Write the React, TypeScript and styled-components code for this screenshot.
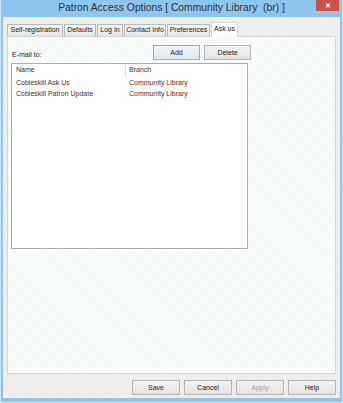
import React from 'react';
import styled, { createGlobalStyle } from 'styled-components';

const GlobalStyle = createGlobalStyle`
    html, body {
        margin: 0;
        padding: 0;
        background: #ffffff;
    }
    * {
        box-sizing: border-box;
    }
`

const WindowS = styled.div`
    width: 343px;
    height: 403px;
    display: flex;
    flex-direction: column;
    background: #8ec5ef;
    border: 1px solid #cfe5f6;
    border-top: none;
    padding: 0 2px 4px 2px;
    font-family: "Liberation Sans", Arial, sans-serif;
`

const TitleBar = styled.div`
    height: 17px;
    display: grid;
    grid-template-columns: 1fr auto 1fr;
    align-items: start;
`

const TitleText = styled.div`
    grid-column: 2;
    font-size: 10.3px;
    line-height: 16px;
    color: #333333;
    white-space: pre;
`

const CloseBtn = styled.div`
    grid-column: 3;
    justify-self: end;
    width: 23px;
    height: 11px;
    background: #c8514c;
    color: #ffffff;
    font-size: 6.5px;
    font-weight: bold;
    line-height: 11px;
    text-align: center;
    margin-right: 1px;
`

const Client = styled.div`
    flex: 1;
    display: flex;
    flex-direction: column;
    background: repeating-linear-gradient(45deg, #f1f1ef 0 1px, #ebebe8 1px 2px);
    padding: 5px 4px 3px 4px;
`

const TabStrip = styled.div`
    display: flex;
    align-items: flex-end;
    height: 14px;
    position: relative;
    z-index: 1;
`

const Tab = styled.div<{ $active?: boolean; $w: number }>`
    width: ${p => p.$w}px;
    height: ${p => p.$active ? 15 : 12}px;
    margin-bottom: ${p => p.$active ? -1 : 0}px;
    margin-right: 1px;
    border: 1px solid ${p => p.$active ? '#d6d6d6' : '#b8b8b8'};
    border-bottom: none;
    background: ${p => p.$active ? '#fcfdfd' : 'linear-gradient(#f4f4f4, #e6e6e6)'};
    font-size: 7px;
    line-height: ${p => p.$active ? 12 : 10}px;
    color: #222222;
    text-align: center;
    white-space: nowrap;
    overflow: hidden;
`

const Panel = styled.div`
    flex: 1;
    display: flex;
    flex-direction: column;
    border: 1px solid #d6d6d6;
    background: repeating-linear-gradient(45deg, #fcfdfd 0 1px, #f4f7f7 1px 2px);
    padding: 8px 3px 0 3px;
`

const TopRow = styled.div`
    display: flex;
    align-items: flex-end;
`

const Label = styled.div`
    width: 142px;
    padding-left: 1px;
    font-size: 7px;
    line-height: 10px;
    color: #222222;
`

const Btn = styled.div<{ $focus?: boolean; $disabled?: boolean; $w: number }>`
    width: ${p => p.$w}px;
    height: 15px;
    border: 1px solid ${p => p.$focus ? '#7db4e6' : '#b4b4b4'};
    background: ${p => p.$focus ? 'linear-gradient(#eef4f8, #dfe9f0)' : 'linear-gradient(#f3f3f3, #e4e4e2)'};
    font-size: 7px;
    line-height: 13px;
    text-align: center;
    color: ${p => p.$disabled ? '#a4a4a4' : '#222222'};
`

const BtnGroup = styled.div`
    display: flex;
    gap: 4px;
`

const ListBox = styled.div`
    margin-top: 3px;
    width: 237px;
    height: 186px;
    background: #ffffff;
    border: 1px solid #adadad;
`

const ListHeader = styled.div`
    display: grid;
    grid-template-columns: 113px 1fr;
    height: 13px;
    font-size: 7px;
    line-height: 12px;
    color: #333333;
`

const HeadCell = styled.div<{ $sep?: boolean }>`
    padding-left: ${p => p.$sep ? 3 : 4}px;
    border-left: ${p => p.$sep ? '1px solid #e2e2e2' : 'none'};
`

const ListRow = styled.div`
    display: grid;
    grid-template-columns: 113px 1fr;
    height: 11px;
    font-size: 7px;
    line-height: 11px;
    color: #622b1c;
`

const Cell = styled.div`
    padding-left: 4px;
    white-space: nowrap;
`

const Footer = styled.div`
    display: flex;
    justify-content: flex-end;
    gap: 4px;
    padding-top: 6px;
`

const tabs = [
    { label: 'Self-registration', w: 56 },
    { label: 'Defaults', w: 32 },
    { label: 'Log In', w: 26 },
    { label: 'Contact Info', w: 42 },
    { label: 'Preferences', w: 43 },
    { label: 'Ask us', w: 27, active: true },
]

const rows = [
    { name: 'Cobleskill Ask Us', branch: 'Community Library' },
    { name: 'Cobleskill Patron Update', branch: 'Community Library' },
]

function App() {
    return (
        <>
            <GlobalStyle />
            <WindowS>
                <TitleBar>
                    <TitleText>{'Patron Access Options [ Community Library  (br) ]'}</TitleText>
                    <CloseBtn>✕</CloseBtn>
                </TitleBar>
                <Client>
                    <TabStrip>
                        {tabs.map(t =>
                            <Tab key={t.label} $w={t.w} $active={t.active}>{t.label}</Tab>)}
                    </TabStrip>
                    <Panel>
                        <TopRow>
                            <Label>E-mail to:</Label>
                            <BtnGroup>
                                <Btn $w={47} $focus>Add</Btn>
                                <Btn $w={47}>Delete</Btn>
                            </BtnGroup>
                        </TopRow>
                        <ListBox>
                            <ListHeader>
                                <HeadCell>Name</HeadCell>
                                <HeadCell $sep>Branch</HeadCell>
                            </ListHeader>
                            {rows.map(r =>
                                <ListRow key={r.name}>
                                    <Cell>{r.name}</Cell>
                                    <Cell>{r.branch}</Cell>
                                </ListRow>)}
                        </ListBox>
                    </Panel>
                    <Footer>
                        <Btn $w={48}>Save</Btn>
                        <Btn $w={48}>Cancel</Btn>
                        <Btn $w={48} $disabled>Apply</Btn>
                        <Btn $w={48}>Help</Btn>
                    </Footer>
                </Client>
            </WindowS>
        </>
    )
}

export default App
